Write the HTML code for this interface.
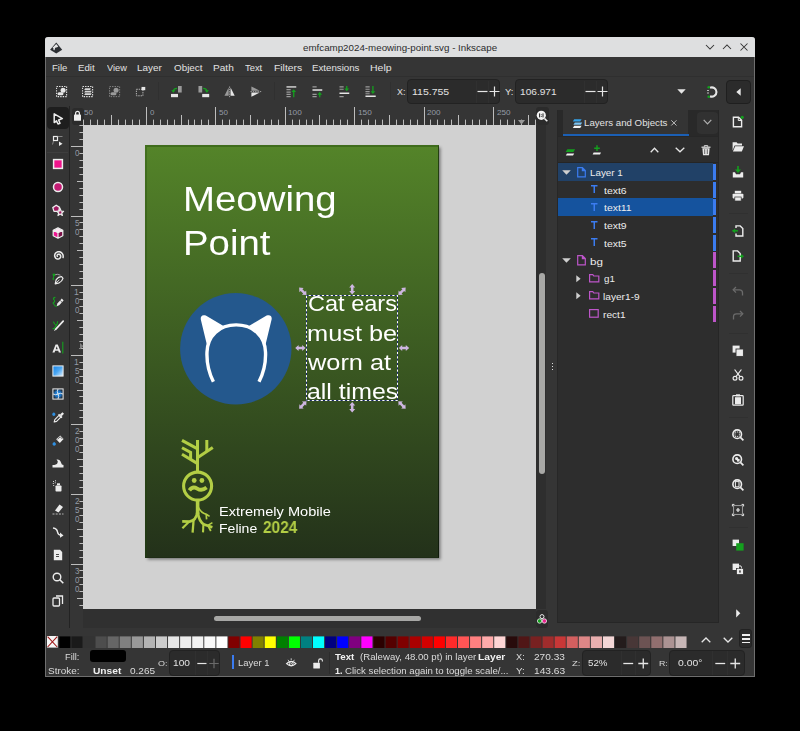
<!DOCTYPE html><html><head><meta charset="utf-8"><title>Inkscape</title><style>
*{box-sizing:border-box;margin:0;padding:0}
html,body{width:800px;height:731px;background:#000;overflow:hidden}
body{position:relative;font-family:"Liberation Sans",sans-serif;font-size:9.5px;color:#e2e2e2}
.a{position:absolute}
.t{position:absolute;white-space:nowrap;line-height:1}
.in{position:absolute;background:#2b2b2b;border:1px solid #222;border-radius:4px}
svg{position:absolute;overflow:visible}
</style></head><body>
<div class="a" style="left:45px;top:37px;width:710px;height:640px;background:#353535;border:1px solid #6f6f6f;border-top:none;border-radius:3px 3px 0 0"></div>
<div class="a" style="left:45px;top:37px;width:710px;height:20.4px;background:#dedfe0;border-radius:3px 3px 0 0"></div>
<div class="t" style="left:302.51px;top:42.90px;font-size:9.4px;color:#2c2c2c;transform:scaleX(1.0407);transform-origin:0 0;">emfcamp2024-meowing-point.svg - Inkscape</div>
<svg style="left:50px;top:41.5px" width="12.4" height="12" viewBox="0 0 12.4 12"><path d="M6.25 0.5 L12.2 7.7 L6.25 11.5 L0.1 7.7 Z" fill="#2b2e32"/><path d="M6.2 1.9 L8.3 4.6 L7.2 5.3 L5.2 5.7 L4.5 8.3 L3.5 8.1 L3.4 6.2 L2.5 5.7 Z" fill="#e6e7e8"/></svg>
<svg style="left:704px;top:42px" width="12" height="10" viewBox="0 0 12 10"><path d="M2 3 L6 7 L10 3" fill="none" stroke="#333" stroke-width="1.05"/></svg>
<svg style="left:721px;top:42px" width="12" height="10" viewBox="0 0 12 10"><path d="M2 7 L6 3 L10 7" fill="none" stroke="#333" stroke-width="1.05"/></svg>
<svg style="left:739px;top:42px" width="10" height="10" viewBox="0 0 10 10"><path d="M1.5 1.5 L8.5 8.5 M8.5 1.5 L1.5 8.5" fill="none" stroke="#333" stroke-width="1.05"/></svg>
<div class="a" style="left:46px;top:76px;width:708px;height:1px;background:#2f2f2f;"></div>
<div class="t" style="left:51.74px;top:63.80px;font-size:9.0px;color:#e2e2e2;transform:scaleX(1.0589);transform-origin:0 0;">File</div>
<div class="t" style="left:78.43px;top:63.80px;font-size:9.0px;color:#e2e2e2;transform:scaleX(1.0737);transform-origin:0 0;">Edit</div>
<div class="t" style="left:106.55px;top:63.80px;font-size:9.0px;color:#e2e2e2;transform:scaleX(1.0256);transform-origin:0 0;">View</div>
<div class="t" style="left:137.31px;top:63.80px;font-size:9.0px;color:#e2e2e2;transform:scaleX(1.1019);transform-origin:0 0;">Layer</div>
<div class="t" style="left:173.66px;top:63.80px;font-size:9.0px;color:#e2e2e2;transform:scaleX(1.0935);transform-origin:0 0;">Object</div>
<div class="t" style="left:213.29px;top:63.80px;font-size:9.0px;color:#e2e2e2;transform:scaleX(1.1198);transform-origin:0 0;">Path</div>
<div class="t" style="left:245.31px;top:63.80px;font-size:9.0px;color:#e2e2e2;transform:scaleX(1.0403);transform-origin:0 0;">Text</div>
<div class="t" style="left:273.67px;top:63.80px;font-size:9.0px;color:#e2e2e2;transform:scaleX(1.1474);transform-origin:0 0;">Filters</div>
<div class="t" style="left:312.32px;top:63.80px;font-size:9.0px;color:#e2e2e2;transform:scaleX(1.0774);transform-origin:0 0;">Extensions</div>
<div class="t" style="left:370.26px;top:63.80px;font-size:9.0px;color:#e2e2e2;transform:scaleX(1.1657);transform-origin:0 0;">Help</div>
<svg style="left:55.9px;top:85.9px" width="11.2" height="11.2" viewBox="0 0 12 12"><rect x="0.6" y="0.6" width="10.8" height="10.8" fill="none" stroke="#e6e6e6" stroke-width="1.1" stroke-dasharray="1.5 1.2"/><circle cx="7.6" cy="4.6" r="2.7" fill="#e6e6e6"/><rect x="1.6" y="6.6" width="6.4" height="3.4" rx="1.7" fill="#e6e6e6"/></svg>
<svg style="left:81.9px;top:85.9px" width="11.2" height="11.2" viewBox="0 0 12 12"><rect x="0.6" y="0.6" width="10.8" height="10.8" fill="none" stroke="#e6e6e6" stroke-width="1.1" stroke-dasharray="1.5 1.2"/><path d="M3.4 2.4H9.6L8.6 4.2H2.4Z M3.4 5.1H10.4L9.4 6.9H2.4Z M3.4 7.8H10.4L9.4 9.6H2.4Z" fill="#d6d6d6"/></svg>
<svg style="left:108.9px;top:85.9px" width="11.2" height="11.2" viewBox="0 0 12 12"><rect x="0.6" y="0.6" width="10.8" height="10.8" fill="none" stroke="#8a8a8a" stroke-width="1" stroke-dasharray="1.5 1.2"/><circle cx="7.6" cy="4.6" r="2.7" fill="#9a9a9a"/><rect x="1.6" y="6.6" width="6.4" height="3.4" rx="1.7" fill="#9a9a9a"/></svg>
<svg style="left:135.4px;top:85.9px" width="11.2" height="11.2" viewBox="0 0 12 12"><rect x="1.5" y="3.5" width="7" height="7" fill="none" stroke="#bbb" stroke-dasharray="1.5 1"/><rect x="7" y="1" width="4" height="3.5" fill="#e6e6e6"/></svg>
<svg style="left:171.4px;top:85.9px" width="11.2" height="11.2" viewBox="0 0 12 12"><rect x="7.5" y="0" width="4" height="7" fill="#9a9a9a"/><rect x="0" y="8.5" width="7.5" height="3.5" fill="#e6e6e6"/><path d="M6.5 2.5 Q2.5 2.5 2.5 6" fill="none" stroke="#14a01e" stroke-width="1.4"/><path d="M0.2 4.5h4.6l-2.3 2.8z" fill="#14a01e"/></svg>
<svg style="left:197.9px;top:85.9px" width="11.2" height="11.2" viewBox="0 0 12 12"><rect x="0.5" y="0" width="4" height="7" fill="#9a9a9a"/><rect x="4.5" y="8.5" width="7.5" height="3.5" fill="#e6e6e6"/><path d="M5.5 2.5 Q9.5 2.5 9.5 6" fill="none" stroke="#14a01e" stroke-width="1.4"/><path d="M7.2 4.5h4.6l-2.3 2.8z" fill="#14a01e"/></svg>
<svg style="left:224.4px;top:85.9px" width="11.2" height="11.2" viewBox="0 0 12 12"><path d="M5 1.5 V10.5 H0.5 Z" fill="#9a9a9a"/><path d="M7 1.5 V10.5 H11.5 Z" fill="#e6e6e6"/><path d="M6 0.5V12" stroke="#ddd" stroke-width="0.7" stroke-dasharray="1.5 1"/></svg>
<svg style="left:250.4px;top:85.9px" width="11.2" height="11.2" viewBox="0 0 12 12"><path d="M1.5 5 H10.5 L1.5 0.5 Z" fill="#9a9a9a"/><path d="M1.5 7 H10.5 L1.5 11.5 Z" fill="#e6e6e6"/><path d="M0.5 6H12" stroke="#ddd" stroke-width="0.7" stroke-dasharray="1.5 1"/></svg>
<svg style="left:286.0px;top:85.9px" width="11.2" height="11.2" viewBox="0 0 12 12"><path d="M0.5 1H11" stroke="#e6e6e6" stroke-width="1.4"/><path d="M0.5 4h4.5M0.5 6.5h4.5M0.5 9h4.5M0.5 11.3h4.5" stroke="#9a9a9a" stroke-width="1.3"/><path d="M8.3 12V5.5" stroke="#14a01e" stroke-width="1.4"/><path d="M5.8 6.5h5l-2.5-3z" fill="#14a01e"/></svg>
<svg style="left:312.4px;top:85.9px" width="11.2" height="11.2" viewBox="0 0 12 12"><path d="M0.5 1h4.5M0.5 9h4.5M0.5 11.3h4.5" stroke="#9a9a9a" stroke-width="1.3"/><path d="M0.5 4.3H11" stroke="#e6e6e6" stroke-width="1.6"/><path d="M8.3 12V8.5" stroke="#14a01e" stroke-width="1.4"/><path d="M5.8 9.3h5l-2.5-3z" fill="#14a01e"/></svg>
<svg style="left:338.79999999999995px;top:85.9px" width="11.2" height="11.2" viewBox="0 0 12 12"><path d="M0.5 1h4.5M0.5 3.5h4.5M0.5 11.3h4.5" stroke="#9a9a9a" stroke-width="1.3"/><path d="M0.5 7.8H11" stroke="#e6e6e6" stroke-width="1.6"/><path d="M8.3 0V3.5" stroke="#14a01e" stroke-width="1.4"/><path d="M5.8 2.7h5l-2.5 3z" fill="#14a01e"/></svg>
<svg style="left:365.0px;top:85.9px" width="11.2" height="11.2" viewBox="0 0 12 12"><path d="M0.5 11H11.5" stroke="#e6e6e6" stroke-width="1.6"/><path d="M0.5 1h4.5M0.5 3.5h4.5M0.5 6h4.5M0.5 8.3h4.5" stroke="#9a9a9a" stroke-width="1.3"/><path d="M8.5 0V6" stroke="#14a01e" stroke-width="1.4"/><path d="M6 5.5h5l-2.5 3z" fill="#14a01e"/></svg>
<div class="a" style="left:158px;top:82px;width:1px;height:18px;background:#303030;"></div>
<div class="a" style="left:274px;top:82px;width:1px;height:18px;background:#303030;"></div>
<div class="a" style="left:390px;top:82px;width:1px;height:18px;background:#303030;"></div>
<div class="t" style="left:396.78px;top:88.10px;font-size:9px;color:#e2e2e2;transform:scaleX(0.9906);transform-origin:0 0;">X:</div>
<div class="in" style="left:407.3px;top:79.3px;width:92.4px;height:24.4px"></div>
<div class="a" style="left:475.5px;top:80.5px;width:1px;height:22px;background:#303030;"></div>
<div class="a" style="left:487.5px;top:80.5px;width:1px;height:22px;background:#303030;"></div>
<div class="t" style="left:412.21px;top:88.20px;font-size:9px;color:#e2e2e2;transform:scaleX(1.1679);transform-origin:0 0;">115.755</div>
<svg style="left:476.5px;top:86px" width="11" height="11" viewBox="0 0 11 11"><path d="M0.5 5.5H10.5" stroke="#e6e6e6" stroke-width="1.2"/></svg>
<svg style="left:488.5px;top:86px" width="11" height="11" viewBox="0 0 11 11"><path d="M0.5 5.5H10.5M5.5 0.5V10.5" stroke="#e6e6e6" stroke-width="1.2"/></svg>
<div class="t" style="left:504.81px;top:88.10px;font-size:9px;color:#e2e2e2;transform:scaleX(1.0541);transform-origin:0 0;">Y:</div>
<div class="in" style="left:515.3px;top:79.3px;width:92.8px;height:24.4px"></div>
<div class="a" style="left:583.5px;top:80.5px;width:1px;height:22px;background:#303030;"></div>
<div class="a" style="left:595.5px;top:80.5px;width:1px;height:22px;background:#303030;"></div>
<div class="t" style="left:520.24px;top:88.20px;font-size:9px;color:#e2e2e2;transform:scaleX(1.1254);transform-origin:0 0;">106.971</div>
<svg style="left:584.5px;top:86px" width="11" height="11" viewBox="0 0 11 11"><path d="M0.5 5.5H10.5" stroke="#e6e6e6" stroke-width="1.2"/></svg>
<svg style="left:596.5px;top:86px" width="11" height="11" viewBox="0 0 11 11"><path d="M0.5 5.5H10.5M5.5 0.5V10.5" stroke="#e6e6e6" stroke-width="1.2"/></svg>
<svg style="left:677px;top:89px" width="9" height="5" viewBox="0 0 9 5"><path d="M0.3 0.3H8.7L4.5 4.8Z" fill="#e6e6e6"/></svg>
<svg style="left:706px;top:86px" width="12" height="12" viewBox="0 0 12 12"><path d="M4 1.8 A4.6 4.6 0 1 1 4 10.2" fill="none" stroke="#e6e6e6" stroke-width="2.1"/><circle cx="2.7" cy="1.3" r="1.3" fill="#14a01e"/><circle cx="2.7" cy="10.7" r="1.3" fill="#14a01e"/><path d="M1 4.5h2M1 7h2" stroke="#ddd" stroke-width="0.8"/></svg>
<div class="in" style="left:725.5px;top:79.5px;width:25.5px;height:24px;border-color:#1f1f1f"></div>
<svg style="left:735.5px;top:87.5px" width="5" height="8" viewBox="0 0 5 8"><path d="M4.7 0.3V7.7L0.3 4Z" fill="#e6e6e6"/></svg>
<div class="a" style="left:69px;top:106px;width:1px;height:522px;background:#232323;"></div>
<div class="a" style="left:46.5px;top:107px;width:22px;height:22px;background:#1e1e1e;border-radius:4px"></div>
<div class="a" style="left:47px;top:152px;width:21px;height:1px;background:#3e3e3e;"></div>
<svg style="left:51.5px;top:112.5px" width="12" height="12" viewBox="0 0 12 12"><path d="M2.2 0.9 L2.2 9.6 L4.5 7.8 L6 11 L8 10.2 L6.6 7 L10.4 5.6 Z" fill="#1e1e1e" stroke="#ececec" stroke-width="1.5" stroke-linejoin="round"/></svg>
<svg style="left:51.5px;top:135px" width="12" height="12" viewBox="0 0 12 12"><rect x="1.5" y="1.5" width="4" height="4" fill="none" stroke="#ececec" stroke-width="1.2"/><path d="M5.5 1.5H10.5M1.5 6L0.5 9.5" stroke="#999" stroke-width="0.8"/><path d="M7 6.5V11L10.5 8.7Z" fill="#ececec"/></svg>
<svg style="left:51.5px;top:158px" width="12" height="12" viewBox="0 0 12 12"><rect x="1.6" y="1.6" width="8.8" height="8.8" fill="#f0148c" stroke="#ececec" stroke-width="1.5"/></svg>
<svg style="left:51.5px;top:181.3px" width="12" height="12" viewBox="0 0 12 12"><circle cx="6" cy="6" r="4.5" fill="#c41c74" stroke="#ececec" stroke-width="1.5"/></svg>
<svg style="left:51.5px;top:204px" width="12" height="12" viewBox="0 0 12 12"><path d="M4.2 1.2 L7.6 3.4 L6.6 7.4 L2 7.4 L0.8 3.6 Z" fill="#a01860" stroke="#ececec" stroke-width="1.3" stroke-linejoin="round"/><path d="M8.2 4.6 L9.2 7.2 L11.6 7.3 L9.7 9 L10.4 11.5 L8.2 10.1 L6 11.5 L6.7 9 L4.8 7.3 L7.2 7.2 Z" fill="#a01860" stroke="#ececec" stroke-width="1.2" stroke-linejoin="round"/></svg>
<svg style="left:51.5px;top:227px" width="12" height="12" viewBox="0 0 12 12"><path d="M6 5.8 L1.3 3.4 V8.6 L6 11 Z" fill="#ee1490"/><path d="M6 5.8 L10.7 3.4 V8.6 L6 11 Z" fill="#7c1048"/><path d="M6 1 L10.7 3.4 L6 5.8 L1.3 3.4 Z" fill="#fbe6f2"/><path d="M6 0.9 L10.8 3.3 V8.7 L6 11.2 L1.2 8.7 V3.3 Z M1.2 3.3 L6 5.8 L10.8 3.3 M6 5.8 V11.2" fill="none" stroke="#ececec" stroke-width="1.25" stroke-linejoin="round"/></svg>
<svg style="left:51.5px;top:249.5px" width="12" height="12" viewBox="0 0 12 12"><path d="M5.35 6.31 L5.23 6.12 L5.14 5.90 L5.11 5.65 L5.14 5.38 L5.22 5.11 L5.37 4.85 L5.58 4.61 L5.85 4.42 L6.17 4.28 L6.53 4.21 L6.90 4.22 L7.29 4.31 L7.66 4.48 L8.00 4.73 L8.29 5.06 L8.52 5.46 L8.66 5.91 L8.71 6.40 L8.65 6.90 L8.50 7.39 L8.23 7.86 L7.87 8.27 L7.41 8.61 L6.88 8.86 L6.30 9.00 L5.68 9.02 L5.06 8.91 L4.46 8.67 L3.91 8.30 L3.43 7.82 L3.05 7.24 L2.79 6.58 L2.66 5.86 L2.69 5.12 L2.86 4.38 L3.19 3.68 L3.66 3.05 L4.27 2.51 L4.98 2.10 L5.77 1.83 L6.62 1.73 L7.49 1.81 L8.34 2.06 L9.14 2.48 L9.84 3.07 L10.43 3.80 L10.86 4.64 L11.12 5.57 L11.19 6.56 L11.06 7.55" fill="none" stroke="#ececec" stroke-width="1.5" stroke-linecap="round"/></svg>
<svg style="left:51.5px;top:272.5px" width="12" height="12" viewBox="0 0 12 12"><path d="M3.2 10.8 L4.2 6.6 Q6.6 3.4 9.6 3.6 L11 5.4 Q10.2 8.2 7.2 9.8 Z" fill="none" stroke="#ececec" stroke-width="1.2" stroke-linejoin="round"/><path d="M3.4 10.6 L7.4 6.8" stroke="#ececec" stroke-width="0.9"/><path d="M2 2 Q5.5 0.5 8.5 2.2" fill="none" stroke="#bdbdbd" stroke-width="0.8"/><path d="M1.8 2.2 L1.2 6.4" stroke="#14a01e" stroke-width="1"/><circle cx="1.9" cy="1.8" r="1.4" fill="#14a01e"/><path d="M0.2 5.6 H2.4 L1.3 7.6Z" fill="#14a01e"/></svg>
<svg style="left:51.5px;top:295.5px" width="12" height="12" viewBox="0 0 12 12"><path d="M4.6 10.2 L5.4 7.4 L9.8 2.6 L11.6 4.4 L7.2 9.2 Z" fill="#ececec"/><path d="M8.2 4.4 L10 6.2" stroke="#353535" stroke-width="0.7"/><path d="M3.4 1.4 Q0.6 1.6 1.8 3.6 Q3.6 5.2 1.6 6.4 Q0.4 7.4 2.6 8.6" fill="none" stroke="#14a01e" stroke-width="1.15"/><path d="M2.2 9.6 L4.8 10.6" stroke="#14a01e" stroke-width="1.1"/></svg>
<svg style="left:51.5px;top:318.5px" width="12" height="12" viewBox="0 0 12 12"><path d="M3.6 10.4 L11.2 2.2" stroke="#ececec" stroke-width="1.7" stroke-linecap="round"/><path d="M2.2 11.6 L4 9.8" stroke="#ececec" stroke-width="0.9"/><path d="M1.4 2.6 Q2.2 5.4 4.4 6.4 M5.6 2.2 Q5.4 5 4.4 6.4 L2.2 9.6 H0.6" fill="none" stroke="#14a01e" stroke-width="1.15"/></svg>
<svg style="left:51.5px;top:341.5px" width="12" height="12" viewBox="0 0 12 12"><path d="M0.4 10.4 L3.6 2.4 H5.8 L9 10.4 H6.8 L6.3 8.8 H3.1 L2.6 10.4 Z M3.7 7.2 H5.7 L4.7 4.3 Z" fill="#ececec"/><path d="M10.8 -0.2V11.4" stroke="#14a01e" stroke-width="1.1"/></svg>
<svg style="left:51.5px;top:364.5px" width="12" height="12" viewBox="0 0 12 12"><defs><linearGradient id="gr1" x1="0" y1="0" x2="1" y2="1"><stop offset="0" stop-color="#1482e6"/><stop offset="0.5" stop-color="#4aa6f2"/><stop offset="1" stop-color="#e2f1fc"/></linearGradient></defs><rect x="0.9" y="0.9" width="10.2" height="10.2" fill="url(#gr1)" stroke="#ececec" stroke-width="1"/></svg>
<svg style="left:51.5px;top:387.5px" width="12" height="12" viewBox="0 0 12 12"><defs><radialGradient id="gr2"><stop offset="0" stop-color="#2f9df5"/><stop offset="0.6" stop-color="#1b6fc0"/><stop offset="1" stop-color="#20303f"/></radialGradient></defs><rect x="0.9" y="0.9" width="10.2" height="10.2" fill="url(#gr2)" stroke="#ececec" stroke-width="1"/><path d="M6 1 Q4.6 3.6 6 6 Q7.4 8.4 6 11 M1 6 Q3.6 7.4 6 6 Q8.4 4.6 11 6" fill="none" stroke="#ececec" stroke-width="0.9"/></svg>
<svg style="left:51.5px;top:410.5px" width="12" height="12" viewBox="0 0 12 12"><path d="M2.2 11 L2.8 8.6 L7 4.4 L8.8 6.2 L4.6 10.4 Z" fill="none" stroke="#ececec" stroke-width="1.1" stroke-linejoin="round"/><path d="M6.6 3.2 L10 6.6" stroke="#ececec" stroke-width="1.5"/><path d="M8 3.6 L10.4 1.2 L12 2.8 L9.6 5.2Z" fill="#ececec"/><path d="M0.3 2.8 Q1.8 0.2 3.3 2.8 A1.6 1.6 0 1 1 0.3 2.8Z" fill="#2f8fe0"/></svg>
<svg style="left:51.5px;top:433.5px" width="12" height="12" viewBox="0 0 12 12"><path d="M4.2 5.2 L8.2 1.6 L11.6 5 L7.8 9 Z" fill="#ececec"/><path d="M5.6 5.2 L8.2 2.8 L10.4 5" fill="none" stroke="#353535" stroke-width="0.7"/><path d="M0.6 9.4 Q2.2 6.4 3.8 9.4 A1.7 1.7 0 1 1 0.6 9.4Z" fill="#2f8fe0"/></svg>
<svg style="left:51.5px;top:457px" width="12" height="12" viewBox="0 0 12 12"><path d="M0.5 10.5 H11.5 V8 Q9.5 8 9 5.5 Q8 2 4.5 2.5 Q6.5 4 5.5 6 Q4.5 8 0.5 8 Z" fill="#ececec"/></svg>
<svg style="left:51.5px;top:479.5px" width="12" height="12" viewBox="0 0 12 12"><rect x="3.5" y="5.5" width="6" height="6" rx="0.8" fill="#ececec"/><rect x="5" y="3.3" width="3" height="2" fill="#ececec"/><path d="M1 1.5h1M3 0.8h1M0.8 3.5h1M2.8 2.8h1M1.2 5.5h1" stroke="#ececec" stroke-width="0.9"/></svg>
<svg style="left:51.5px;top:502.5px" width="12" height="12" viewBox="0 0 12 12"><path d="M3 7.5 L7.5 1.5 L11 4 L6.5 9.5 Z" fill="#ececec"/><path d="M0.5 11 H11.5" stroke="#bbb" stroke-width="1" stroke-dasharray="2 1.2"/></svg>
<svg style="left:51.5px;top:525.5px" width="12" height="12" viewBox="0 0 12 12"><path d="M1 2 Q5 2.5 5.5 6 Q6 9 9 9.3" fill="none" stroke="#ececec" stroke-width="1.5"/><path d="M8 6.5 L11.5 9.5 L8 11.8 Z" fill="#ececec"/></svg>
<svg style="left:51.5px;top:548.5px" width="12" height="12" viewBox="0 0 12 12"><path d="M1.8 0.8 H8 L10.2 3 V11.2 H1.8 Z" fill="#ececec"/><path d="M4 5.5 h3 M4 7.5 h3" stroke="#353535" stroke-width="0.9"/></svg>
<svg style="left:51.5px;top:571.5px" width="12" height="12" viewBox="0 0 12 12"><circle cx="5" cy="5" r="3.8" fill="none" stroke="#ececec" stroke-width="1.4"/><path d="M7.8 7.8 L11.3 11.3" stroke="#ececec" stroke-width="1.6"/></svg>
<svg style="left:51.5px;top:594.5px" width="12" height="12" viewBox="0 0 12 12"><rect x="1" y="3" width="6.5" height="8" rx="1" fill="none" stroke="#ececec" stroke-width="1.3"/><path d="M4 1 H10.5 V9" fill="none" stroke="#ececec" stroke-width="1.3"/></svg>
<div class="a" style="left:71.5px;top:107.5px;width:12px;height:17px;background:#2b2b2b;border-radius:3px"></div>
<svg style="left:74px;top:110px" width="7" height="11" viewBox="0 0 7 11"><path d="M1.6 5 V3.2 A1.9 1.9 0 0 1 5.4 3.2 V5" fill="none" stroke="#eee" stroke-width="1.2"/><rect x="0" y="4.6" width="7" height="6.2" rx="0.6" fill="#eee"/></svg>
<svg style="left:0;top:0" width="800" height="731"><rect x="83" y="119.6" width="1" height="5.400000000000006" fill="#bdbdbd"/><rect x="90" y="119.6" width="1" height="5.400000000000006" fill="#bdbdbd"/><rect x="97" y="119.6" width="1" height="5.400000000000006" fill="#bdbdbd"/><rect x="104" y="119.6" width="1" height="5.400000000000006" fill="#bdbdbd"/><rect x="111" y="115" width="1" height="10" fill="#bdbdbd"/><rect x="118" y="119.6" width="1" height="5.400000000000006" fill="#bdbdbd"/><rect x="125" y="119.6" width="1" height="5.400000000000006" fill="#bdbdbd"/><rect x="132" y="119.6" width="1" height="5.400000000000006" fill="#bdbdbd"/><rect x="139" y="119.6" width="1" height="5.400000000000006" fill="#bdbdbd"/><rect x="146" y="107" width="1" height="18" fill="#bdbdbd"/><rect x="153" y="119.6" width="1" height="5.400000000000006" fill="#bdbdbd"/><rect x="160" y="119.6" width="1" height="5.400000000000006" fill="#bdbdbd"/><rect x="167" y="119.6" width="1" height="5.400000000000006" fill="#bdbdbd"/><rect x="174" y="119.6" width="1" height="5.400000000000006" fill="#bdbdbd"/><rect x="181" y="115" width="1" height="10" fill="#bdbdbd"/><rect x="188" y="119.6" width="1" height="5.400000000000006" fill="#bdbdbd"/><rect x="194" y="119.6" width="1" height="5.400000000000006" fill="#bdbdbd"/><rect x="201" y="119.6" width="1" height="5.400000000000006" fill="#bdbdbd"/><rect x="208" y="119.6" width="1" height="5.400000000000006" fill="#bdbdbd"/><rect x="215" y="107" width="1" height="18" fill="#bdbdbd"/><rect x="222" y="119.6" width="1" height="5.400000000000006" fill="#bdbdbd"/><rect x="229" y="119.6" width="1" height="5.400000000000006" fill="#bdbdbd"/><rect x="236" y="119.6" width="1" height="5.400000000000006" fill="#bdbdbd"/><rect x="243" y="119.6" width="1" height="5.400000000000006" fill="#bdbdbd"/><rect x="250" y="115" width="1" height="10" fill="#bdbdbd"/><rect x="257" y="119.6" width="1" height="5.400000000000006" fill="#bdbdbd"/><rect x="264" y="119.6" width="1" height="5.400000000000006" fill="#bdbdbd"/><rect x="271" y="119.6" width="1" height="5.400000000000006" fill="#bdbdbd"/><rect x="278" y="119.6" width="1" height="5.400000000000006" fill="#bdbdbd"/><rect x="285" y="107" width="1" height="18" fill="#bdbdbd"/><rect x="292" y="119.6" width="1" height="5.400000000000006" fill="#bdbdbd"/><rect x="299" y="119.6" width="1" height="5.400000000000006" fill="#bdbdbd"/><rect x="306" y="119.6" width="1" height="5.400000000000006" fill="#bdbdbd"/><rect x="312" y="119.6" width="1" height="5.400000000000006" fill="#bdbdbd"/><rect x="319" y="115" width="1" height="10" fill="#bdbdbd"/><rect x="326" y="119.6" width="1" height="5.400000000000006" fill="#bdbdbd"/><rect x="333" y="119.6" width="1" height="5.400000000000006" fill="#bdbdbd"/><rect x="340" y="119.6" width="1" height="5.400000000000006" fill="#bdbdbd"/><rect x="347" y="119.6" width="1" height="5.400000000000006" fill="#bdbdbd"/><rect x="354" y="107" width="1" height="18" fill="#bdbdbd"/><rect x="361" y="119.6" width="1" height="5.400000000000006" fill="#bdbdbd"/><rect x="368" y="119.6" width="1" height="5.400000000000006" fill="#bdbdbd"/><rect x="375" y="119.6" width="1" height="5.400000000000006" fill="#bdbdbd"/><rect x="382" y="119.6" width="1" height="5.400000000000006" fill="#bdbdbd"/><rect x="389" y="115" width="1" height="10" fill="#bdbdbd"/><rect x="396" y="119.6" width="1" height="5.400000000000006" fill="#bdbdbd"/><rect x="403" y="119.6" width="1" height="5.400000000000006" fill="#bdbdbd"/><rect x="410" y="119.6" width="1" height="5.400000000000006" fill="#bdbdbd"/><rect x="417" y="119.6" width="1" height="5.400000000000006" fill="#bdbdbd"/><rect x="424" y="107" width="1" height="18" fill="#bdbdbd"/><rect x="430" y="119.6" width="1" height="5.400000000000006" fill="#bdbdbd"/><rect x="437" y="119.6" width="1" height="5.400000000000006" fill="#bdbdbd"/><rect x="444" y="119.6" width="1" height="5.400000000000006" fill="#bdbdbd"/><rect x="451" y="119.6" width="1" height="5.400000000000006" fill="#bdbdbd"/><rect x="458" y="115" width="1" height="10" fill="#bdbdbd"/><rect x="465" y="119.6" width="1" height="5.400000000000006" fill="#bdbdbd"/><rect x="472" y="119.6" width="1" height="5.400000000000006" fill="#bdbdbd"/><rect x="479" y="119.6" width="1" height="5.400000000000006" fill="#bdbdbd"/><rect x="486" y="119.6" width="1" height="5.400000000000006" fill="#bdbdbd"/><rect x="493" y="107" width="1" height="18" fill="#bdbdbd"/><rect x="500" y="119.6" width="1" height="5.400000000000006" fill="#bdbdbd"/><rect x="507" y="119.6" width="1" height="5.400000000000006" fill="#bdbdbd"/><rect x="514" y="119.6" width="1" height="5.400000000000006" fill="#bdbdbd"/><rect x="521" y="119.6" width="1" height="5.400000000000006" fill="#bdbdbd"/><rect x="528" y="115" width="1" height="10" fill="#bdbdbd"/><rect x="535" y="119.6" width="1" height="5.400000000000006" fill="#bdbdbd"/></svg>
<div class="t" style="left:83.98px;top:108.60px;font-size:8px;color:#949ba6;transform:scaleX(1.0024);transform-origin:0 0;">50</div>
<div class="t" style="left:149.68px;top:108.60px;font-size:8px;color:#949ba6;transform:scaleX(0.9896);transform-origin:0 0;">0</div>
<div class="t" style="left:219.08px;top:108.60px;font-size:8px;color:#949ba6;transform:scaleX(1.0024);transform-origin:0 0;">50</div>
<div class="t" style="left:288.18px;top:108.60px;font-size:8px;color:#949ba6;transform:scaleX(1.0289);transform-origin:0 0;">100</div>
<div class="t" style="left:357.58px;top:108.60px;font-size:8px;color:#949ba6;transform:scaleX(1.0289);transform-origin:0 0;">150</div>
<div class="t" style="left:427.19px;top:108.60px;font-size:8px;color:#949ba6;transform:scaleX(1.0127);transform-origin:0 0;">200</div>
<div class="t" style="left:496.59px;top:108.60px;font-size:8px;color:#949ba6;transform:scaleX(1.0127);transform-origin:0 0;">250</div>
<svg style="left:517.5px;top:120px" width="7" height="5" viewBox="0 0 7 5"><path d="M0 0H7L3.5 4.5Z" fill="#9a9a9a"/></svg>
<svg style="left:0;top:0" width="800" height="731"><rect x="79.4" y="125" width="4.0" height="1" fill="#bdbdbd"/><rect x="79.4" y="132" width="4.0" height="1" fill="#bdbdbd"/><rect x="79.4" y="139" width="4.0" height="1" fill="#bdbdbd"/><rect x="71" y="146" width="12.400000000000006" height="1" fill="#bdbdbd"/><rect x="79.4" y="153" width="4.0" height="1" fill="#bdbdbd"/><rect x="79.4" y="160" width="4.0" height="1" fill="#bdbdbd"/><rect x="79.4" y="167" width="4.0" height="1" fill="#bdbdbd"/><rect x="79.4" y="174" width="4.0" height="1" fill="#bdbdbd"/><rect x="77" y="181" width="6.400000000000006" height="1" fill="#bdbdbd"/><rect x="79.4" y="188" width="4.0" height="1" fill="#bdbdbd"/><rect x="79.4" y="195" width="4.0" height="1" fill="#bdbdbd"/><rect x="79.4" y="202" width="4.0" height="1" fill="#bdbdbd"/><rect x="79.4" y="209" width="4.0" height="1" fill="#bdbdbd"/><rect x="71" y="216" width="12.400000000000006" height="1" fill="#bdbdbd"/><rect x="79.4" y="222" width="4.0" height="1" fill="#bdbdbd"/><rect x="79.4" y="229" width="4.0" height="1" fill="#bdbdbd"/><rect x="79.4" y="236" width="4.0" height="1" fill="#bdbdbd"/><rect x="79.4" y="243" width="4.0" height="1" fill="#bdbdbd"/><rect x="77" y="250" width="6.400000000000006" height="1" fill="#bdbdbd"/><rect x="79.4" y="257" width="4.0" height="1" fill="#bdbdbd"/><rect x="79.4" y="264" width="4.0" height="1" fill="#bdbdbd"/><rect x="79.4" y="271" width="4.0" height="1" fill="#bdbdbd"/><rect x="79.4" y="278" width="4.0" height="1" fill="#bdbdbd"/><rect x="71" y="285" width="12.400000000000006" height="1" fill="#bdbdbd"/><rect x="79.4" y="292" width="4.0" height="1" fill="#bdbdbd"/><rect x="79.4" y="299" width="4.0" height="1" fill="#bdbdbd"/><rect x="79.4" y="306" width="4.0" height="1" fill="#bdbdbd"/><rect x="79.4" y="313" width="4.0" height="1" fill="#bdbdbd"/><rect x="77" y="320" width="6.400000000000006" height="1" fill="#bdbdbd"/><rect x="79.4" y="327" width="4.0" height="1" fill="#bdbdbd"/><rect x="79.4" y="334" width="4.0" height="1" fill="#bdbdbd"/><rect x="79.4" y="341" width="4.0" height="1" fill="#bdbdbd"/><rect x="79.4" y="348" width="4.0" height="1" fill="#bdbdbd"/><rect x="71" y="355" width="12.400000000000006" height="1" fill="#bdbdbd"/><rect x="79.4" y="362" width="4.0" height="1" fill="#bdbdbd"/><rect x="79.4" y="369" width="4.0" height="1" fill="#bdbdbd"/><rect x="79.4" y="376" width="4.0" height="1" fill="#bdbdbd"/><rect x="79.4" y="383" width="4.0" height="1" fill="#bdbdbd"/><rect x="77" y="390" width="6.400000000000006" height="1" fill="#bdbdbd"/><rect x="79.4" y="396" width="4.0" height="1" fill="#bdbdbd"/><rect x="79.4" y="403" width="4.0" height="1" fill="#bdbdbd"/><rect x="79.4" y="410" width="4.0" height="1" fill="#bdbdbd"/><rect x="79.4" y="417" width="4.0" height="1" fill="#bdbdbd"/><rect x="71" y="424" width="12.400000000000006" height="1" fill="#bdbdbd"/><rect x="79.4" y="431" width="4.0" height="1" fill="#bdbdbd"/><rect x="79.4" y="438" width="4.0" height="1" fill="#bdbdbd"/><rect x="79.4" y="445" width="4.0" height="1" fill="#bdbdbd"/><rect x="79.4" y="452" width="4.0" height="1" fill="#bdbdbd"/><rect x="77" y="459" width="6.400000000000006" height="1" fill="#bdbdbd"/><rect x="79.4" y="466" width="4.0" height="1" fill="#bdbdbd"/><rect x="79.4" y="473" width="4.0" height="1" fill="#bdbdbd"/><rect x="79.4" y="480" width="4.0" height="1" fill="#bdbdbd"/><rect x="79.4" y="487" width="4.0" height="1" fill="#bdbdbd"/><rect x="71" y="494" width="12.400000000000006" height="1" fill="#bdbdbd"/><rect x="79.4" y="501" width="4.0" height="1" fill="#bdbdbd"/><rect x="79.4" y="508" width="4.0" height="1" fill="#bdbdbd"/><rect x="79.4" y="515" width="4.0" height="1" fill="#bdbdbd"/><rect x="79.4" y="522" width="4.0" height="1" fill="#bdbdbd"/><rect x="77" y="529" width="6.400000000000006" height="1" fill="#bdbdbd"/><rect x="79.4" y="536" width="4.0" height="1" fill="#bdbdbd"/><rect x="79.4" y="543" width="4.0" height="1" fill="#bdbdbd"/><rect x="79.4" y="550" width="4.0" height="1" fill="#bdbdbd"/><rect x="79.4" y="557" width="4.0" height="1" fill="#bdbdbd"/><rect x="71" y="564" width="12.400000000000006" height="1" fill="#bdbdbd"/><rect x="79.4" y="570" width="4.0" height="1" fill="#bdbdbd"/><rect x="79.4" y="577" width="4.0" height="1" fill="#bdbdbd"/><rect x="79.4" y="584" width="4.0" height="1" fill="#bdbdbd"/><rect x="79.4" y="591" width="4.0" height="1" fill="#bdbdbd"/><rect x="77" y="598" width="6.400000000000006" height="1" fill="#bdbdbd"/><rect x="79.4" y="605" width="4.0" height="1" fill="#bdbdbd"/></svg>
<div class="t" style="left:74.78px;top:148.85px;font-size:8.3px;color:#949ba6;transform:scaleX(0.9538);transform-origin:0 0;">0</div>
<div class="t" style="left:74.78px;top:218.85px;font-size:8.3px;color:#949ba6;transform:scaleX(0.9639);transform-origin:0 0;">5</div>
<div class="t" style="left:74.78px;top:227.90px;font-size:8.3px;color:#949ba6;transform:scaleX(0.9538);transform-origin:0 0;">0</div>
<div class="t" style="left:74.44px;top:287.85px;font-size:8.3px;color:#949ba6;transform:scaleX(1.0525);transform-origin:0 0;">1</div>
<div class="t" style="left:74.78px;top:296.90px;font-size:8.3px;color:#949ba6;transform:scaleX(0.9538);transform-origin:0 0;">0</div>
<div class="t" style="left:74.78px;top:305.95px;font-size:8.3px;color:#949ba6;transform:scaleX(0.9538);transform-origin:0 0;">0</div>
<div class="t" style="left:74.44px;top:357.85px;font-size:8.3px;color:#949ba6;transform:scaleX(1.0525);transform-origin:0 0;">1</div>
<div class="t" style="left:74.78px;top:366.90px;font-size:8.3px;color:#949ba6;transform:scaleX(0.9639);transform-origin:0 0;">5</div>
<div class="t" style="left:74.78px;top:375.95px;font-size:8.3px;color:#949ba6;transform:scaleX(0.9538);transform-origin:0 0;">0</div>
<div class="t" style="left:74.68px;top:426.85px;font-size:8.3px;color:#949ba6;transform:scaleX(1.0062);transform-origin:0 0;">2</div>
<div class="t" style="left:74.78px;top:435.90px;font-size:8.3px;color:#949ba6;transform:scaleX(0.9538);transform-origin:0 0;">0</div>
<div class="t" style="left:74.78px;top:444.95px;font-size:8.3px;color:#949ba6;transform:scaleX(0.9538);transform-origin:0 0;">0</div>
<div class="t" style="left:74.68px;top:496.85px;font-size:8.3px;color:#949ba6;transform:scaleX(1.0062);transform-origin:0 0;">2</div>
<div class="t" style="left:74.78px;top:505.90px;font-size:8.3px;color:#949ba6;transform:scaleX(0.9639);transform-origin:0 0;">5</div>
<div class="t" style="left:74.78px;top:514.95px;font-size:8.3px;color:#949ba6;transform:scaleX(0.9538);transform-origin:0 0;">0</div>
<div class="t" style="left:74.82px;top:566.85px;font-size:8.3px;color:#949ba6;transform:scaleX(0.9538);transform-origin:0 0;">3</div>
<div class="t" style="left:74.78px;top:575.90px;font-size:8.3px;color:#949ba6;transform:scaleX(0.9538);transform-origin:0 0;">0</div>
<div class="t" style="left:74.78px;top:584.95px;font-size:8.3px;color:#949ba6;transform:scaleX(0.9538);transform-origin:0 0;">0</div>
<svg style="left:79.6px;top:343px" width="3.6" height="6.6" viewBox="0 0 3.6 6.6"><path d="M0 0V6.6L3.6 3.3Z" fill="#808080"/></svg>
<div class="a" style="left:83.4px;top:125px;width:452.4px;height:484px;background:#d1d1d1;"></div>
<div class="a" style="left:145px;top:145px;width:293.7px;height:412.8px;background:linear-gradient(180deg,#548429 0%,#23311a 100%);background-origin:border-box;box-shadow:1.5px 1.5px 3px rgba(0,0,0,0.45);border-top:2px solid rgba(30,70,10,0.38);border-left:2px solid rgba(30,70,10,0.30);border-right:1.6px solid rgba(0,10,0,0.55);border-bottom:1px solid rgba(0,10,0,0.12)"></div>
<div class="t" style="left:182.93px;top:181.40px;font-size:35px;color:#fff;transform:scaleX(1.0970);transform-origin:0 0;will-change:transform;">Meowing</div>
<div class="t" style="left:182.93px;top:225.00px;font-size:35px;color:#fff;transform:scaleX(1.0959);transform-origin:0 0;will-change:transform;">Point</div>
<svg style="left:0;top:0" width="800" height="731"><circle cx="235.8" cy="348.8" r="55.7" fill="#24588d"/>
<path d="M213.4 381.8 C208 371 206.6 361 207 352 C207.6 336 219 324.9 236.2 324.9 C253.4 324.9 264.9 336 265.5 352 C265.9 361 264.5 371 259 381.8" fill="none" stroke="#fff" stroke-width="3.4"/>
<path d="M207.2 346 L200.8 319.5 C200.2 316 202.5 314.4 205.8 315.6 L223.5 326 C214.5 330 209 337 207.2 346 Z" fill="#fff"/>
<path d="M265.2 346 L271.6 319.5 C272.2 316 269.9 314.4 266.6 315.6 L248.9 326 C257.9 330 263.4 337 265.2 346 Z" fill="#fff"/></svg>
<div class="t" style="left:307.62px;top:294.45px;font-size:21.5px;color:#fff;transform:scaleX(1.0939);transform-origin:0 0;will-change:transform;">Cat ears</div>
<div class="t" style="left:306.55px;top:323.85px;font-size:21.5px;color:#fff;transform:scaleX(1.1796);transform-origin:0 0;will-change:transform;">must be</div>
<div class="t" style="left:307.60px;top:352.65px;font-size:21.5px;color:#fff;transform:scaleX(1.1791);transform-origin:0 0;will-change:transform;">worn at</div>
<div class="t" style="left:307.21px;top:381.55px;font-size:21.5px;color:#fff;transform:scaleX(1.1566);transform-origin:0 0;will-change:transform;">all times</div>
<svg style="left:0;top:0" width="800" height="731"><rect x="306.5" y="295.5" width="91" height="105" fill="none" stroke="#fff" stroke-width="1"/>
<rect x="306.5" y="295.5" width="91" height="105" fill="none" stroke="#1a2a6a" stroke-width="1" stroke-dasharray="2.2 2.2"/><path d="M352.2 284.1L349.2 287.5H350.95V291.1H349.2L352.2 294.5L355.2 291.1H353.45V287.5H355.2Z" fill="#cdb6e0"/><path d="M352.2 402.1L349.2 405.5H350.95V409.1H349.2L352.2 412.5L355.2 409.1H353.45V405.5H355.2Z" fill="#cdb6e0"/><path d="M295.2 348L298.59999999999997 345V346.75H302.2V345L305.59999999999997 348L302.2 351V349.25H298.59999999999997V351Z" fill="#cdb6e0"/><path d="M398.8 348L402.2 345V346.75H405.8V345L409.2 348L405.8 351V349.25H402.2V351Z" fill="#cdb6e0"/><g transform="rotate(45 302.8 291.3)"><path d="M297.6 291.3L301.0 288.3V290.05H304.6V288.3L308.0 291.3L304.6 294.3V292.55H301.0V294.3Z" fill="#cdb6e0"/></g><g transform="rotate(-45 402 291.3)"><path d="M396.8 291.3L400.2 288.3V290.05H403.8V288.3L407.2 291.3L403.8 294.3V292.55H400.2V294.3Z" fill="#cdb6e0"/></g><g transform="rotate(-45 302.8 405)"><path d="M297.6 405L301.0 402V403.75H304.6V402L308.0 405L304.6 408V406.25H301.0V408Z" fill="#cdb6e0"/></g><g transform="rotate(45 402 405)"><path d="M396.8 405L400.2 402V403.75H403.8V402L407.2 405L403.8 408V406.25H400.2V408Z" fill="#cdb6e0"/></g></svg>
<svg style="left:0;top:0" width="800" height="731"><g fill="none" stroke="#b3ce45" stroke-width="3" stroke-linecap="butt" stroke-linejoin="miter">
<path d="M197.5 440V472"/>
<path d="M182 440.4L197.2 448.6"/>
<path d="M182 447.8L190.6 452.4V459.8"/>
<path d="M182 454.2L197.2 463.4"/>
<path d="M197.8 457.4L212.8 447.4"/>
<path d="M206.8 440V451.4"/>
<circle cx="197.6" cy="486.1" r="14" stroke-width="3.1"/>
<path d="M189.4 490.4 Q192.6 485.8 197.2 488.6 T206.6 487.6" stroke-width="3.8"/>
<path d="M197.6 500.6V514" stroke-width="3.6"/>
<path d="M198.2 507 Q200.6 512.6 206.4 514.4 L209.6 516.4 M206.2 514.4 L206.6 519.4" stroke-width="1.7"/>
<path d="M197.4 512 Q196.4 520.4 189.4 521.6 L182.2 521.4" stroke-width="2.6"/>
<path d="M189 521.8 L182.4 528.2" stroke-width="2.2"/>
<path d="M193.6 520 L192.6 532.6" stroke-width="2.3"/>
<path d="M197.8 512 Q198.8 521.4 204.2 524.6 L212.4 527.2" stroke-width="2.6"/>
<path d="M203.4 524.2 L203 532.4" stroke-width="2.1"/>
<path d="M208.2 526 L210.8 531" stroke-width="1.8"/>
<path d="M207.4 525.6 L212.4 522.6" stroke-width="1.6"/>
</g>
<circle cx="194.2" cy="480.5" r="2.4" fill="#b3ce45"/><circle cx="201.9" cy="480.5" r="2.4" fill="#b3ce45"/></svg>
<div class="t" style="left:218.83px;top:504.80px;font-size:13.2px;color:#fff;transform:scaleX(1.1058);transform-origin:0 0;will-change:transform;">Extremely Mobile</div>
<div class="t" style="left:218.88px;top:521.80px;font-size:13.2px;color:#fff;transform:scaleX(1.0644);transform-origin:0 0;will-change:transform;">Feline</div>
<div class="t" style="left:263.46px;top:518.90px;font-size:16.4px;color:#b3ce45;font-weight:bold;transform:scaleX(0.9432);transform-origin:0 0;will-change:transform;">2024</div>
<div class="a" style="left:535.6px;top:125px;width:10.8px;height:484px;background:#2e2e2e;"></div>
<div class="a" style="left:538.9px;top:272.5px;width:6.2px;height:201.5px;background:#a8a8a6;border-radius:3.2px"></div>
<div class="a" style="left:83.4px;top:609px;width:452.4px;height:18.6px;background:#303030;"></div>
<div class="a" style="left:214px;top:615.8px;width:207px;height:5.7px;background:#a7a7a5;border-radius:3px"></div>
<div class="a" style="left:535.5px;top:107px;width:13px;height:17.5px;background:#2b2b2b;border-radius:3px"></div>
<svg style="left:536px;top:110px" width="12" height="12" viewBox="0 0 12 12"><circle cx="5.3" cy="5.3" r="4.6" fill="#f2f2f2"/><path d="M8.5 8.5L11.3 11.3" stroke="#f2f2f2" stroke-width="1.6"/><path d="M3.6 3.4V7.4M7 3.4V7.4M5.3 4.4v0.8M5.3 6v0.8" stroke="#222" stroke-width="1"/></svg>
<div class="a" style="left:535.9px;top:610px;width:11.8px;height:17.6px;background:#2b2b2b;border-radius:3px"></div>
<svg style="left:536.8px;top:614.2px" width="10" height="10" viewBox="0 0 10 10"><circle cx="5" cy="2.6" r="2" fill="none" stroke="#eee" stroke-width="1"/><circle cx="2.6" cy="7" r="2.2" fill="#14a01e" stroke="#eee" stroke-width="0.8"/><circle cx="7.4" cy="7" r="2.2" fill="#e8218c" stroke="#eee" stroke-width="0.8"/></svg>
<div class="a" style="left:552px;top:363px;width:1.2px;height:1.4px;background:#ddd;"></div>
<div class="a" style="left:552px;top:366px;width:1.2px;height:1.4px;background:#ddd;"></div>
<div class="a" style="left:552px;top:369px;width:1.2px;height:1.4px;background:#ddd;"></div>
<div class="a" style="left:557px;top:110px;width:162.2px;height:512.6px;background:#2d2d2d;border-left:1px solid #272727;border-right:1px solid #262626;border-bottom:1px solid #262626"></div>
<div class="a" style="left:558px;top:110px;width:160.4px;height:26.4px;background:#292929;"></div>
<div class="a" style="left:563px;top:110px;width:125.3px;height:24.5px;background:#343434;"></div>
<div class="a" style="left:563px;top:134px;width:125.5px;height:2.3px;background:#1b5fb4;"></div>
<div class="a" style="left:558px;top:136.4px;width:160.4px;height:1px;background:#272727;"></div>
<svg style="left:572px;top:119px" width="11" height="9.5" viewBox="0 0 11 9.5"><path d="M2.2 0.3H9.6L8.2 2.5H0.8Z" fill="#35a2e8"/><path d="M2.8 3.5H10.2L8.8 5.7H1.4Z" fill="#7cc4f2"/><path d="M2.2 6.8H9.6L8.2 9H0.8Z" fill="#f4f4f4"/></svg>
<div class="t" style="left:583.93px;top:118.45px;font-size:9.5px;color:#e2e2e2;transform:scaleX(1.0192);transform-origin:0 0;">Layers and Objects</div>
<svg style="left:671.3px;top:120.3px" width="5.8" height="5.8" viewBox="0 0 5.8 5.8"><path d="M0.3 0.3L5.5 5.5M5.5 0.3L0.3 5.5" stroke="#bdbdbd" stroke-width="1"/></svg>
<div class="a" style="left:697.1px;top:111.8px;width:20.9px;height:22.3px;background:#313131;border-radius:4px"></div>
<svg style="left:703px;top:119px" width="9" height="6" viewBox="0 0 9 6"><path d="M0.7 0.8L4.5 4.8L8.3 0.8" fill="none" stroke="#b0b0b0" stroke-width="1.2"/></svg>
<svg style="left:565px;top:148.6px" width="10.5" height="6.8" viewBox="0 0 10.5 6.8"><path d="M2.4 0.2H10.2L8.4 2.9H0.6Z" fill="#14a01e"/><path d="M2 4.4H9.2L8 6.5H0.8Z" fill="#f0f0f0"/></svg>
<svg style="left:591.5px;top:145px" width="10" height="10" viewBox="0 0 10 10"><path d="M5 0.3V6M2.2 3.2H7.8" stroke="#14a01e" stroke-width="1.4"/><path d="M1.6 7.4H9L8 9.4H0.6Z" fill="#f0f0f0"/></svg>
<svg style="left:650px;top:147px" width="9" height="6" viewBox="0 0 9 6"><path d="M0.7 5.2L4.5 1.2L8.3 5.2" fill="none" stroke="#e6e6e6" stroke-width="1.3"/></svg>
<svg style="left:675px;top:147px" width="10" height="6" viewBox="0 0 10 6"><path d="M0.7 0.8L5 4.8L9.3 0.8" fill="none" stroke="#e6e6e6" stroke-width="1.3"/></svg>
<svg style="left:700.5px;top:145px" width="10" height="10.5" viewBox="0 0 10 10.5"><path d="M0.5 2.2H9.5" stroke="#e6e6e6" stroke-width="1.2"/><path d="M3.3 1.8V0.6H6.7V1.8" fill="none" stroke="#e6e6e6" stroke-width="0.9"/><path d="M1.4 3.2H8.6L8 10.2H2Z" fill="#e6e6e6"/><path d="M3.7 4.2V9M6.3 4.2V9" stroke="#2d2d2d" stroke-width="0.7"/></svg>
<div class="a" style="left:558px;top:162px;width:160.4px;height:1px;background:#252525;"></div>
<div class="a" style="left:558.3px;top:163.0px;width:154.4px;height:17.72px;background:#214167;"></div>
<div class="a" style="left:713.2px;top:163.8px;width:3px;height:16.02px;background:#3b7cf0;"></div>
<svg style="left:561.5px;top:169.66000000000003px" width="9" height="5" viewBox="0 0 9 5"><path d="M0.2 0.2H8.8L4.5 4.8Z" fill="#cfcfcf"/></svg>
<svg style="left:577px;top:166.56px" width="9" height="10.5" viewBox="0 0 9 10.5"><path d="M0.7 0.7H5.4L8.3 3.6V9.8H0.7Z M5.4 0.7V3.6H8.3" fill="none" stroke="#3b7cf0" stroke-width="1.2"/></svg>
<div class="t" style="left:590.21px;top:167.95px;font-size:9.5px;color:#ececec;transform:scaleX(1.0330);transform-origin:0 0;">Layer 1</div>
<div class="a" style="left:713.2px;top:181.52px;width:3px;height:16.02px;background:#3b7cf0;"></div>
<svg style="left:590.5px;top:185.17999999999998px" width="6.5" height="8" viewBox="0 0 6.5 8"><path d="M0 0.8H6.5M3.25 0.8V8" stroke="#3b7cf0" stroke-width="1.5" fill="none"/></svg>
<div class="t" style="left:603.84px;top:185.95px;font-size:9.5px;color:#ececec;transform:scaleX(1.0975);transform-origin:0 0;">text6</div>
<div class="a" style="left:558.3px;top:198.44px;width:154.4px;height:17.72px;background:#15539e;"></div>
<div class="a" style="left:713.2px;top:199.24px;width:3px;height:16.02px;background:#3b7cf0;"></div>
<svg style="left:590.5px;top:202.9px" width="6.5" height="8" viewBox="0 0 6.5 8"><path d="M0 0.8H6.5M3.25 0.8V8" stroke="#3b7cf0" stroke-width="1.5" fill="none"/></svg>
<div class="t" style="left:603.84px;top:202.95px;font-size:9.5px;color:#ececec;transform:scaleX(1.0973);transform-origin:0 0;">text11</div>
<div class="a" style="left:713.2px;top:216.96px;width:3px;height:16.02px;background:#3b7cf0;"></div>
<svg style="left:590.5px;top:220.61999999999998px" width="6.5" height="8" viewBox="0 0 6.5 8"><path d="M0 0.8H6.5M3.25 0.8V8" stroke="#3b7cf0" stroke-width="1.5" fill="none"/></svg>
<div class="t" style="left:603.84px;top:220.95px;font-size:9.5px;color:#ececec;transform:scaleX(1.1001);transform-origin:0 0;">text9</div>
<div class="a" style="left:713.2px;top:234.68px;width:3px;height:16.02px;background:#3b7cf0;"></div>
<svg style="left:590.5px;top:238.34px" width="6.5" height="8" viewBox="0 0 6.5 8"><path d="M0 0.8H6.5M3.25 0.8V8" stroke="#3b7cf0" stroke-width="1.5" fill="none"/></svg>
<div class="t" style="left:603.84px;top:238.95px;font-size:9.5px;color:#ececec;transform:scaleX(1.0975);transform-origin:0 0;">text5</div>
<div class="a" style="left:713.2px;top:252.4px;width:3px;height:16.02px;background:#bd55c9;"></div>
<svg style="left:561.5px;top:258.26px" width="9" height="5" viewBox="0 0 9 5"><path d="M0.2 0.2H8.8L4.5 4.8Z" fill="#cfcfcf"/></svg>
<svg style="left:577px;top:255.15999999999997px" width="9" height="10.5" viewBox="0 0 9 10.5"><path d="M0.7 0.7H5.4L8.3 3.6V9.8H0.7Z M5.4 0.7V3.6H8.3" fill="none" stroke="#bd55c9" stroke-width="1.2"/></svg>
<div class="t" style="left:590.25px;top:256.95px;font-size:9.5px;color:#ececec;transform:scaleX(1.2183);transform-origin:0 0;">bg</div>
<div class="a" style="left:713.2px;top:270.12px;width:3px;height:16.02px;background:#bd55c9;"></div>
<svg style="left:576px;top:274.58px" width="5" height="7.5" viewBox="0 0 5 7.5"><path d="M0.3 0.2V7.3L4.6 3.75Z" fill="#cfcfcf"/></svg>
<svg style="left:589px;top:273.58px" width="10.5" height="8.5" viewBox="0 0 10.5 8.5"><path d="M0.6 0.6H3.8L4.8 2H9.8V7.8H0.6Z" fill="none" stroke="#bd55c9" stroke-width="1.2"/></svg>
<div class="t" style="left:603.61px;top:273.95px;font-size:9.5px;color:#ececec;transform:scaleX(1.0270);transform-origin:0 0;">g1</div>
<div class="a" style="left:713.2px;top:287.84px;width:3px;height:16.02px;background:#bd55c9;"></div>
<svg style="left:576px;top:292.29999999999995px" width="5" height="7.5" viewBox="0 0 5 7.5"><path d="M0.3 0.2V7.3L4.6 3.75Z" fill="#cfcfcf"/></svg>
<svg style="left:589px;top:291.29999999999995px" width="10.5" height="8.5" viewBox="0 0 10.5 8.5"><path d="M0.6 0.6H3.8L4.8 2H9.8V7.8H0.6Z" fill="none" stroke="#bd55c9" stroke-width="1.2"/></svg>
<div class="t" style="left:603.34px;top:291.95px;font-size:9.5px;color:#ececec;transform:scaleX(1.0677);transform-origin:0 0;">layer1-9</div>
<div class="a" style="left:713.2px;top:305.56px;width:3px;height:16.02px;background:#bd55c9;"></div>
<svg style="left:589px;top:308.92px" width="10" height="9" viewBox="0 0 10 9"><rect x="0.6" y="0.6" width="8.6" height="7.6" fill="none" stroke="#bd55c9" stroke-width="1.2"/></svg>
<div class="t" style="left:603.34px;top:309.95px;font-size:9.5px;color:#ececec;transform:scaleX(1.0676);transform-origin:0 0;">rect1</div>
<svg style="left:732.0px;top:116.0px" width="12" height="12" viewBox="0 0 12 12"><path d="M1.4 1.2H6.6L9.6 4.2V10.8H1.4Z" fill="none" stroke="#ececec" stroke-width="1.4"/><path d="M6.3 1.2V4.5H9.6" fill="none" stroke="#ececec" stroke-width="1"/><circle cx="10.2" cy="1.3" r="1.6" fill="#14a01e"/></svg>
<svg style="left:732.0px;top:141.0px" width="12" height="12" viewBox="0 0 12 12"><path d="M0.6 1.2H4.6L5.6 2.6H10V4.4H2.6L0.6 9.6Z" fill="#ececec"/><path d="M3.2 5.2H12L9.8 10.6H0.9Z" fill="#ececec"/></svg>
<svg style="left:732.0px;top:166.0px" width="12" height="12" viewBox="0 0 12 12"><path d="M6 0V5" stroke="#14a01e" stroke-width="1.6"/><path d="M3 3.6H9L6 7Z" fill="#14a01e"/><path d="M0.8 6.2H3L4 8.2H8L9 6.2H11.2V11.4H0.8Z" fill="#ececec"/></svg>
<svg style="left:732.0px;top:190.0px" width="12" height="12" viewBox="0 0 12 12"><rect x="2.8" y="0.8" width="6.4" height="2.6" fill="#ececec"/><rect x="0.6" y="3.8" width="10.8" height="4.6" rx="0.8" fill="#ececec"/><rect x="2.8" y="7" width="6.4" height="4" fill="#ececec" stroke="#353535" stroke-width="0.7"/></svg>
<div class="a" style="left:729px;top:213px;width:19px;height:1px;background:#303030;"></div>
<svg style="left:732.0px;top:225.0px" width="12" height="12" viewBox="0 0 12 12"><path d="M4 3V0.9H8.2L10.8 3.5V11H4V8.6" fill="none" stroke="#ececec" stroke-width="1.4"/><path d="M0.5 5.8H6" stroke="#14a01e" stroke-width="1.5"/><path d="M3.2 3.4V8.2L0.2 5.8Z" fill="#14a01e"/></svg>
<svg style="left:732.0px;top:249.5px" width="12" height="12" viewBox="0 0 12 12"><path d="M1.2 0.9H5.6L8.2 3.5V11H1.2Z" fill="none" stroke="#ececec" stroke-width="1.4"/><path d="M5.5 6.3H11" stroke="#14a01e" stroke-width="1.5"/><path d="M9 3.9V8.7L12 6.3Z" fill="#14a01e"/></svg>
<div class="a" style="left:729px;top:273px;width:19px;height:1px;background:#303030;"></div>
<svg style="left:732.0px;top:285.5px" width="12" height="10" viewBox="0 0 12 10"><path d="M4 1L1.2 3.8L4 6.6" fill="none" stroke="#6b6b6b" stroke-width="1.3"/><path d="M1.5 3.8H7.5Q10.5 3.8 10.5 6.8V9.5" fill="none" stroke="#6b6b6b" stroke-width="1.3"/></svg>
<svg style="left:732.0px;top:310.0px" width="12" height="10" viewBox="0 0 12 10"><path d="M8 1L10.8 3.8L8 6.6" fill="none" stroke="#6b6b6b" stroke-width="1.3"/><path d="M10.5 3.8H4.5Q1.5 3.8 1.5 6.8V9.5" fill="none" stroke="#6b6b6b" stroke-width="1.3"/></svg>
<div class="a" style="left:729px;top:333px;width:19px;height:1px;background:#303030;"></div>
<svg style="left:732.0px;top:344.5px" width="12" height="12" viewBox="0 0 12 12"><rect x="0.6" y="0.6" width="7" height="7" fill="#ececec"/><rect x="4" y="4" width="7.4" height="7.4" fill="#ececec" stroke="#353535" stroke-width="0.9"/></svg>
<svg style="left:732.0px;top:369.0px" width="12" height="12" viewBox="0 0 12 12"><path d="M2.6 0.5L8 7.6M9.4 0.5L4 7.6" stroke="#ececec" stroke-width="1.2" fill="none"/><circle cx="3" cy="9.2" r="1.9" fill="none" stroke="#ececec" stroke-width="1.2"/><circle cx="9" cy="9.2" r="1.9" fill="none" stroke="#ececec" stroke-width="1.2"/></svg>
<svg style="left:732.0px;top:394.0px" width="12" height="12" viewBox="0 0 12 12"><rect x="0.8" y="1.6" width="10.4" height="9.6" rx="0.8" fill="none" stroke="#ececec" stroke-width="1.2"/><rect x="3" y="3.2" width="6" height="7" fill="#ececec"/><rect x="4" y="0.3" width="4" height="2" fill="#ececec"/></svg>
<div class="a" style="left:729px;top:417px;width:19px;height:1px;background:#303030;"></div>
<svg style="left:732.0px;top:428.5px" width="12" height="12" viewBox="0 0 12 12"><circle cx="5.2" cy="5.2" r="4.3" fill="none" stroke="#ececec" stroke-width="1.6"/><path d="M8.4 8.4L11.4 11.4" stroke="#ececec" stroke-width="1.7"/><rect x="3" y="3" width="4.4" height="4.4" fill="none" stroke="#ececec" stroke-width="0.9" stroke-dasharray="1.2 0.8"/></svg>
<svg style="left:732.0px;top:454.0px" width="12" height="12" viewBox="0 0 12 12"><circle cx="5.2" cy="5.2" r="4.3" fill="none" stroke="#ececec" stroke-width="1.6"/><path d="M8.4 8.4L11.4 11.4" stroke="#ececec" stroke-width="1.7"/><circle cx="4.6" cy="4.6" r="1.6" fill="#ececec"/><rect x="5" y="5" width="2.6" height="2.6" fill="#ececec"/></svg>
<svg style="left:732.0px;top:478.5px" width="12" height="12" viewBox="0 0 12 12"><circle cx="5.2" cy="5.2" r="4.3" fill="none" stroke="#ececec" stroke-width="1.6"/><path d="M8.4 8.4L11.4 11.4" stroke="#ececec" stroke-width="1.7"/><rect x="3.4" y="2.6" width="3.6" height="5.2" fill="none" stroke="#ececec" stroke-width="1"/></svg>
<svg style="left:732.0px;top:503.5px" width="12" height="12" viewBox="0 0 12 12"><rect x="1.6" y="1.6" width="8.8" height="8.8" fill="none" stroke="#aaa" stroke-width="0.9"/><path d="M0.4 2.4V0.4H2.4M9.6 0.4H11.6V2.4M11.6 9.6V11.6H9.6M2.4 11.6H0.4V9.6" fill="none" stroke="#ececec" stroke-width="1"/><path d="M6 4V8M4 6H8" stroke="#ececec" stroke-width="1.2"/></svg>
<div class="a" style="left:729px;top:526.5px;width:19px;height:1px;background:#303030;"></div>
<svg style="left:732.0px;top:539.0px" width="12" height="12" viewBox="0 0 12 12"><rect x="0.6" y="0.6" width="6.4" height="6.4" fill="#ececec"/><rect x="4.2" y="4.2" width="7.4" height="7.4" fill="#14a01e"/></svg>
<svg style="left:732.0px;top:563.0px" width="12" height="12" viewBox="0 0 12 12"><rect x="0.6" y="0.6" width="6.4" height="6.4" fill="#ececec"/><rect x="4.4" y="5.4" width="7" height="6.2" fill="#ececec" stroke="#353535" stroke-width="0.8"/><path d="M6.3 5.4V4.4A1.6 1.6 0 0 1 9.5 4.4V5.4" fill="none" stroke="#ececec" stroke-width="1"/><rect x="7.2" y="7.4" width="1.5" height="2.2" fill="#353535"/></svg>
<svg style="left:735.6px;top:609px" width="4.5" height="8.6" viewBox="0 0 4.5 8.6"><path d="M0.2 0.2V8.4L4.3 4.3Z" fill="#ececec"/></svg>
<svg style="left:47px;top:636.1999999999999px" width="10.8" height="11.6"><rect width="10.8" height="11.6" fill="#f6f6f6"/><path d="M0.6 0.6L10.2 11M10.2 0.6L0.6 11" stroke="#a01818" stroke-width="1.1"/></svg>
<svg style="left:0;top:0" width="800" height="731" ><rect x="59.30" y="636.4" width="11.13" height="11.6" fill="#000000"/><rect x="71.38" y="636.4" width="11.13" height="11.6" fill="#1a1a1a"/><rect x="83.46" y="636.4" width="11.13" height="11.6" fill="#333333"/><rect x="95.54" y="636.4" width="11.13" height="11.6" fill="#4d4d4d"/><rect x="107.62" y="636.4" width="11.13" height="11.6" fill="#666666"/><rect x="119.70" y="636.4" width="11.13" height="11.6" fill="#808080"/><rect x="131.78" y="636.4" width="11.13" height="11.6" fill="#999999"/><rect x="143.87" y="636.4" width="11.13" height="11.6" fill="#b3b3b3"/><rect x="155.95" y="636.4" width="11.13" height="11.6" fill="#cccccc"/><rect x="168.03" y="636.4" width="11.13" height="11.6" fill="#e6e6e6"/><rect x="180.11" y="636.4" width="11.13" height="11.6" fill="#ececec"/><rect x="192.19" y="636.4" width="11.13" height="11.6" fill="#f2f2f2"/><rect x="204.27" y="636.4" width="11.13" height="11.6" fill="#f9f9f9"/><rect x="216.35" y="636.4" width="11.13" height="11.6" fill="#ffffff"/><rect x="228.43" y="636.4" width="11.13" height="11.6" fill="#800000"/><rect x="240.51" y="636.4" width="11.13" height="11.6" fill="#ff0000"/><rect x="252.59" y="636.4" width="11.13" height="11.6" fill="#808000"/><rect x="264.67" y="636.4" width="11.13" height="11.6" fill="#ffff00"/><rect x="276.75" y="636.4" width="11.13" height="11.6" fill="#008000"/><rect x="288.83" y="636.4" width="11.13" height="11.6" fill="#00ff00"/><rect x="300.92" y="636.4" width="11.13" height="11.6" fill="#008080"/><rect x="313.00" y="636.4" width="11.13" height="11.6" fill="#00ffff"/><rect x="325.08" y="636.4" width="11.13" height="11.6" fill="#000080"/><rect x="337.16" y="636.4" width="11.13" height="11.6" fill="#0000ff"/><rect x="349.24" y="636.4" width="11.13" height="11.6" fill="#800080"/><rect x="361.32" y="636.4" width="11.13" height="11.6" fill="#ff00ff"/><rect x="373.40" y="636.4" width="11.13" height="11.6" fill="#2b0000"/><rect x="385.48" y="636.4" width="11.13" height="11.6" fill="#550000"/><rect x="397.56" y="636.4" width="11.13" height="11.6" fill="#800000"/><rect x="409.64" y="636.4" width="11.13" height="11.6" fill="#aa0000"/><rect x="421.72" y="636.4" width="11.13" height="11.6" fill="#d40000"/><rect x="433.80" y="636.4" width="11.13" height="11.6" fill="#ff0000"/><rect x="445.88" y="636.4" width="11.13" height="11.6" fill="#ff2a2a"/><rect x="457.97" y="636.4" width="11.13" height="11.6" fill="#ff5555"/><rect x="470.05" y="636.4" width="11.13" height="11.6" fill="#ff8080"/><rect x="482.13" y="636.4" width="11.13" height="11.6" fill="#ffaaaa"/><rect x="494.21" y="636.4" width="11.13" height="11.6" fill="#ffd5d5"/><rect x="506.29" y="636.4" width="11.13" height="11.6" fill="#280b0b"/><rect x="518.37" y="636.4" width="11.13" height="11.6" fill="#501616"/><rect x="530.45" y="636.4" width="11.13" height="11.6" fill="#782121"/><rect x="542.53" y="636.4" width="11.13" height="11.6" fill="#a02c2c"/><rect x="554.61" y="636.4" width="11.13" height="11.6" fill="#c83737"/><rect x="566.69" y="636.4" width="11.13" height="11.6" fill="#d35f5f"/><rect x="578.77" y="636.4" width="11.13" height="11.6" fill="#de8787"/><rect x="590.85" y="636.4" width="11.13" height="11.6" fill="#e9afaf"/><rect x="602.93" y="636.4" width="11.13" height="11.6" fill="#f4d7d7"/><rect x="615.02" y="636.4" width="11.13" height="11.6" fill="#241c1c"/><rect x="627.10" y="636.4" width="11.13" height="11.6" fill="#483737"/><rect x="639.18" y="636.4" width="11.13" height="11.6" fill="#6c5353"/><rect x="651.26" y="636.4" width="11.13" height="11.6" fill="#916f6f"/><rect x="663.34" y="636.4" width="11.13" height="11.6" fill="#ac9393"/><rect x="675.42" y="636.4" width="11.13" height="11.6" fill="#c8b7b7"/></svg>
<svg style="left:700.8px;top:636.6px" width="10" height="6" viewBox="0 0 10 6"><path d="M0.7 5.3L5 1L9.3 5.3" fill="none" stroke="#e6e6e6" stroke-width="1.3"/></svg>
<svg style="left:722.7px;top:636.6px" width="10" height="6" viewBox="0 0 10 6"><path d="M0.7 0.7L5 5L9.3 0.7" fill="none" stroke="#e6e6e6" stroke-width="1.3"/></svg>
<div class="a" style="left:739.4px;top:628.8px;width:13px;height:19.6px;background:#2b2b2b;border:1px solid #222;border-radius:3px"></div>
<div class="a" style="left:741.5px;top:634.2px;width:8.8px;height:1.5px;background:#f0f0f0;"></div>
<div class="a" style="left:741.5px;top:638px;width:8.8px;height:1.5px;background:#f0f0f0;"></div>
<div class="a" style="left:741.5px;top:641.8px;width:8.8px;height:1.5px;background:#f0f0f0;"></div>
<div class="t" style="left:64.66px;top:652.75px;font-size:9.3px;color:#dcdcdc;transform:scaleX(0.9938);transform-origin:0 0;">Fill:</div>
<div class="a" style="left:90px;top:649.5px;width:35.5px;height:12.5px;background:#000;border-radius:3px"></div>
<div class="t" style="left:47.55px;top:666.95px;font-size:9.3px;color:#dcdcdc;transform:scaleX(1.0700);transform-origin:0 0;">Stroke:</div>
<div class="t" style="left:93.39px;top:666.55px;font-size:9.3px;color:#f0f0f0;font-weight:bold;transform:scaleX(1.0971);transform-origin:0 0;">Unset</div>
<div class="t" style="left:129.60px;top:666.95px;font-size:9.3px;color:#dcdcdc;transform:scaleX(1.0797);transform-origin:0 0;">0.265</div>
<div class="t" style="left:157.90px;top:659.90px;font-size:8px;color:#dcdcdc;transform:scaleX(1.1216);transform-origin:0 0;">O:</div>
<div class="in" style="left:169px;top:650px;width:50.5px;height:25.5px"></div>
<div class="a" style="left:194.5px;top:651px;width:1px;height:23.5px;background:#303030;"></div>
<div class="a" style="left:207px;top:651px;width:1px;height:23.5px;background:#303030;"></div>
<div class="t" style="left:173.24px;top:659.45px;font-size:9.3px;color:#e2e2e2;transform:scaleX(1.0926);transform-origin:0 0;">100</div>
<svg style="left:196.5px;top:657.5px" width="10" height="11" viewBox="0 0 10 11"><path d="M0.3 5.5H9.5" stroke="#e6e6e6" stroke-width="1.2"/></svg>
<svg style="left:208.6px;top:657.5px" width="10" height="11" viewBox="0 0 10 11"><path d="M0.3 5.5H9.7M5 0.7V10.3" stroke="#6a6a6a" stroke-width="1.2"/></svg>
<div class="a" style="left:232px;top:655px;width:2.2px;height:13.5px;background:#3b7cf0;"></div>
<div class="t" style="left:238.05px;top:659.45px;font-size:9.3px;color:#dcdcdc;transform:scaleX(1.0116);transform-origin:0 0;">Layer 1</div>
<svg style="left:286px;top:658.2px" width="10.5" height="9.5" viewBox="0 0 10.5 9.5"><path d="M0.6 5.6Q5.2 1.2 9.9 5.6Q5.2 10 0.6 5.6Z" fill="none" stroke="#ececec" stroke-width="1.2"/><circle cx="5.2" cy="5.6" r="1.9" fill="none" stroke="#ececec" stroke-width="1"/><circle cx="5.2" cy="5.6" r="0.7" fill="#ececec"/><path d="M2 1.8L2.8 3M5.2 0.3V2M8.4 1.8L7.6 3" stroke="#ececec" stroke-width="0.8"/></svg>
<svg style="left:313px;top:657.5px" width="10" height="10.5" viewBox="0 0 10 10.5"><rect x="0.3" y="4.8" width="6.6" height="5.6" rx="0.5" fill="#ececec"/><path d="M5.6 4.8V2.8A1.9 1.9 0 0 1 9.4 2.8V3.6" fill="none" stroke="#ececec" stroke-width="1.1"/></svg>
<div class="a" style="left:329px;top:652px;width:1px;height:22px;background:#2c2c2c;"></div>
<div class="t" style="left:335.40px;top:652.05px;font-size:9.5px;color:#f2f2f2;font-weight:bold;transform:scaleX(1.0258);transform-origin:0 0;">Text</div>
<div class="t" style="left:359.72px;top:652.65px;font-size:9.3px;color:#dcdcdc;transform:scaleX(1.0328);transform-origin:0 0;">(Raleway, 48.00 pt) in layer</div>
<div class="t" style="left:477.83px;top:652.05px;font-size:9.5px;color:#f2f2f2;font-weight:bold;transform:scaleX(1.0770);transform-origin:0 0;">Layer</div>
<div class="t" style="left:334.96px;top:665.85px;font-size:9.5px;color:#f2f2f2;font-weight:bold;transform:scaleX(0.9406);transform-origin:0 0;">1.</div>
<div class="t" style="left:345.12px;top:666.95px;font-size:9.3px;color:#dcdcdc;transform:scaleX(1.0372);transform-origin:0 0;">Click selection again to toggle scale/...</div>
<div class="t" style="left:516.07px;top:652.65px;font-size:9.3px;color:#dcdcdc;transform:scaleX(0.9975);transform-origin:0 0;">X:</div>
<div class="t" style="left:533.79px;top:652.65px;font-size:9.3px;color:#dcdcdc;transform:scaleX(1.0861);transform-origin:0 0;">270.33</div>
<div class="t" style="left:516.10px;top:666.95px;font-size:9.3px;color:#dcdcdc;transform:scaleX(1.0615);transform-origin:0 0;">Y:</div>
<div class="t" style="left:533.54px;top:666.95px;font-size:9.3px;color:#dcdcdc;transform:scaleX(1.0954);transform-origin:0 0;">143.63</div>
<div class="t" style="left:572.22px;top:659.90px;font-size:8px;color:#dcdcdc;transform:scaleX(1.1851);transform-origin:0 0;">Z:</div>
<div class="in" style="left:581.6px;top:649.5px;width:69.7px;height:26px"></div>
<div class="a" style="left:620.5px;top:650.5px;width:1px;height:24px;background:#303030;"></div>
<div class="a" style="left:635.3px;top:650.5px;width:1px;height:24px;background:#303030;"></div>
<div class="t" style="left:588.41px;top:659.45px;font-size:9.3px;color:#e2e2e2;transform:scaleX(1.0501);transform-origin:0 0;">52%</div>
<svg style="left:623px;top:657.5px" width="10.5" height="11" viewBox="0 0 10.5 11"><path d="M0.3 5.5H10.2" stroke="#e6e6e6" stroke-width="1.3"/></svg>
<svg style="left:637.7px;top:657.5px" width="10.5" height="11" viewBox="0 0 10.5 11"><path d="M0.3 5.5H10.2M5.25 0.5V10.5" stroke="#e6e6e6" stroke-width="1.3"/></svg>
<div class="t" style="left:659.30px;top:659.90px;font-size:8px;color:#dcdcdc;transform:scaleX(1.0994);transform-origin:0 0;">R:</div>
<div class="in" style="left:668.6px;top:649.5px;width:76px;height:26px"></div>
<div class="a" style="left:712.4px;top:650.5px;width:1px;height:24px;background:#303030;"></div>
<div class="a" style="left:727.3px;top:650.5px;width:1px;height:24px;background:#303030;"></div>
<div class="t" style="left:677.58px;top:659.45px;font-size:9.3px;color:#e2e2e2;transform:scaleX(1.1160);transform-origin:0 0;">0.00°</div>
<svg style="left:715px;top:657.5px" width="10.5" height="11" viewBox="0 0 10.5 11"><path d="M0.3 5.5H10.2" stroke="#e6e6e6" stroke-width="1.3"/></svg>
<svg style="left:730px;top:657.5px" width="10.5" height="11" viewBox="0 0 10.5 11"><path d="M0.3 5.5H10.2M5.25 0.5V10.5" stroke="#e6e6e6" stroke-width="1.3"/></svg>
</body></html>
